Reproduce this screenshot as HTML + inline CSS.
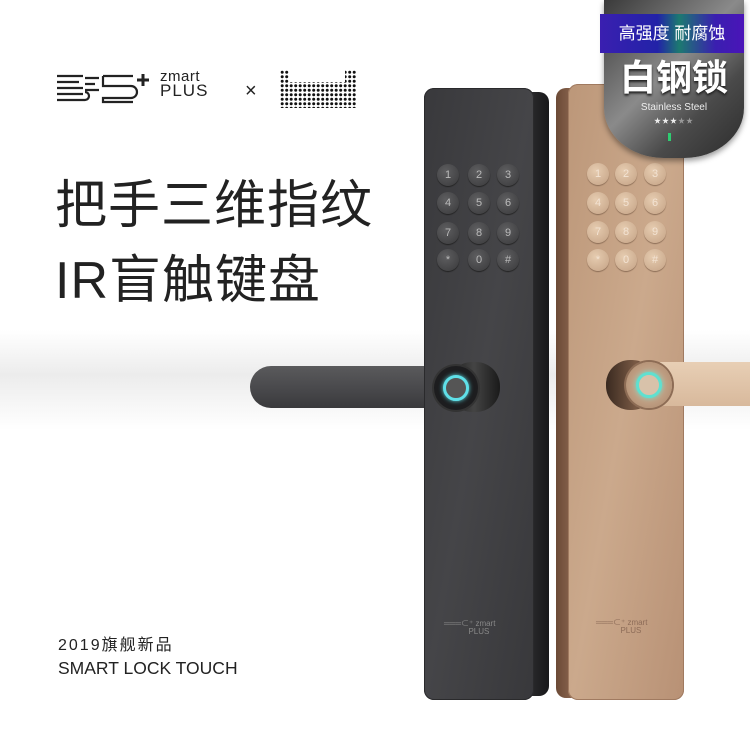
<!DOCTYPE html>
<html><head><meta charset="utf-8"><style>
*{margin:0;padding:0;box-sizing:border-box}
body{width:750px;height:750px;overflow:hidden;background:#fff;position:relative;font-family:"Liberation Sans","Noto Sans CJK SC",sans-serif}
.a{position:absolute}
.key{position:absolute;width:22px;height:22px;border-radius:50%;text-align:center;line-height:22px;font-size:11px}
.dk .key{background:radial-gradient(circle at 40% 35%,#5e5e60,#39393b);color:#bbb;box-shadow:0 1px 1px #222}
.gd .key{background:radial-gradient(circle at 40% 35%,#e6ccb0,#c4a285);color:#f3e3d3;box-shadow:0 1px 1px #8a6c55}
</style></head><body>
<div class="a" style="left:0;top:330px;width:750px;height:100px;background:linear-gradient(180deg,#fff,#ececec 45%,#fff)"></div>
<svg class="a" style="left:55px;top:72px" width="100" height="36" viewBox="0 0 100 36" fill="none" stroke="#222" stroke-width="2.2">
<path d="M2 4h26M2 10h22M2 16h26M2 22h26M2 28h28a4 4 0 0 0 0-8"/>
<path d="M30 6h14M30 12h10M30 18h14"/>
<path d="M48 4h30M48 4v10h28a6 6 0 0 1 0 12H48v4h30"/>
<path d="M88 2v12M82 8h12" stroke-width="3"/>
</svg>
<div class="a" style="left:160px;top:70px;font-size:15px;line-height:14px;color:#222;letter-spacing:0.5px">zmart<br><span style="font-size:17px;letter-spacing:1px">PLUS</span></div>
<div class="a" style="left:245px;top:80px;font-size:20px;color:#222">×</div>
<svg class="a" style="left:280px;top:70px" width="76" height="38">
<defs><pattern id="p" width="4.5" height="4.5" patternUnits="userSpaceOnUse"><circle cx="2.2" cy="2.2" r="1.5" fill="#111"/></pattern></defs>
<path d="M0 0h9v12h56V0h11v38H0z" fill="url(#p)"/>
</svg>
<div class="a" style="left:55px;top:175px;font-size:52px;line-height:62px;color:#222;letter-spacing:1px">把手三维指纹</div>
<div class="a" style="left:55px;top:250px;font-size:52px;line-height:62px;color:#222;letter-spacing:1px">IR盲触键盘</div>
<div class="a" style="left:58px;top:631px;font-size:16px;color:#222;letter-spacing:2px">2019旗舰新品</div>
<div class="a" style="left:58px;top:658px;font-size:17.5px;color:#222">SMART LOCK TOUCH</div>

<div class="a" style="left:250px;top:366px;width:230px;height:42px;border-radius:21px 0 0 21px;background:linear-gradient(180deg,#5a5a5c,#47474a 60%,#3a3a3c)"></div>
<div class="a" style="left:530px;top:92px;width:19px;height:604px;border-radius:0 10px 10px 0;background:linear-gradient(90deg,#2a2a2c,#18181a)"></div>
<div class="a dk" style="left:424px;top:88px;width:110px;height:612px;border-radius:10px;background:linear-gradient(100deg,#39393c,#454548 50%,#38383b);box-shadow:inset 0 0 0 1px #2a2a2c">
<div class="key" style="left:13px;top:76px">1</div><div class="key" style="left:44px;top:76px">2</div><div class="key" style="left:73px;top:76px">3</div>
<div class="key" style="left:13px;top:104px">4</div><div class="key" style="left:44px;top:104px">5</div><div class="key" style="left:73px;top:104px">6</div>
<div class="key" style="left:13px;top:134px">7</div><div class="key" style="left:44px;top:134px">8</div><div class="key" style="left:73px;top:134px">9</div>
<div class="key" style="left:13px;top:161px">*</div><div class="key" style="left:44px;top:161px">0</div><div class="key" style="left:73px;top:161px">#</div>
<div class="a" style="left:20px;top:532px;font-size:8px;color:#888;line-height:8px">═══⊂⁺ zmart<br>&nbsp;&nbsp;&nbsp;&nbsp;&nbsp;&nbsp;&nbsp;&nbsp;&nbsp;&nbsp;&nbsp;PLUS</div>
</div>
<div class="a" style="left:448px;top:362px;width:52px;height:50px;border-radius:24px;background:linear-gradient(90deg,#1a1a1a,#444 50%,#1a1a1a)"></div>
<div class="a" style="left:434px;top:366px;width:44px;height:44px;border-radius:50%;background:#1d1d1f;box-shadow:0 0 0 2px #333"></div>
<div class="a" style="left:443px;top:375px;width:26px;height:26px;border-radius:50%;border:3px solid #5fe0e8;background:#555;box-shadow:0 0 5px #5fe0e8"></div>

<div class="a" style="left:556px;top:88px;width:18px;height:610px;border-radius:10px 0 0 10px;background:linear-gradient(90deg,#6b4a36,#8c6650)"></div>
<div class="a gd" style="left:568px;top:84px;width:116px;height:616px;border-radius:10px;background:linear-gradient(100deg,#bc9779,#cba98c 50%,#b89175);box-shadow:inset 0 0 0 1px #a07a60">
<div class="key" style="left:19px;top:79px">1</div><div class="key" style="left:47px;top:79px">2</div><div class="key" style="left:76px;top:79px">3</div>
<div class="key" style="left:19px;top:108px">4</div><div class="key" style="left:47px;top:108px">5</div><div class="key" style="left:76px;top:108px">6</div>
<div class="key" style="left:19px;top:137px">7</div><div class="key" style="left:47px;top:137px">8</div><div class="key" style="left:76px;top:137px">9</div>
<div class="key" style="left:19px;top:165px">*</div><div class="key" style="left:47px;top:165px">0</div><div class="key" style="left:76px;top:165px">#</div>
<div class="a" style="left:28px;top:535px;font-size:8px;color:#8d6c58;line-height:8px">═══⊂⁺ zmart<br>&nbsp;&nbsp;&nbsp;&nbsp;&nbsp;&nbsp;&nbsp;&nbsp;&nbsp;&nbsp;&nbsp;PLUS</div>
</div>
<div class="a" style="left:660px;top:362px;width:90px;height:44px;background:linear-gradient(180deg,#e8cfb5,#d8b99c)"></div>
<div class="a" style="left:606px;top:360px;width:50px;height:50px;border-radius:24px;background:linear-gradient(90deg,#3a2a20,#7a5a45 60%,#3a2a20)"></div>
<div class="a" style="left:626px;top:362px;width:46px;height:46px;border-radius:50%;background:radial-gradient(#d9bda2,#a88468);box-shadow:0 0 0 2px #8d6c55"></div>
<div class="a" style="left:636px;top:372px;width:26px;height:26px;border-radius:50%;border:3px solid #5fe0d0;background:#d8c2aa;box-shadow:0 0 5px #5fe0d0"></div>

<div class="a" style="left:604px;top:0;width:140px;height:158px;border-radius:0 0 60px 60px/0 0 50px 50px;background:linear-gradient(135deg,#3a3a3a,#8a8a8a 45%,#4a4a4a 70%,#2c2c2c);box-shadow:0 3px 6px rgba(0,0,0,.4)"></div>
<div class="a" style="left:600px;top:14px;width:144px;height:39px;background:linear-gradient(90deg,#3a1fb0,#2222a8 40%,#1c7a70 55%,#3a1fb0 80%,#4a14b8);color:#fff;font-size:17px;line-height:39px;text-align:center">高强度 耐腐蚀</div>
<div class="a" style="left:604px;top:56px;width:140px;text-align:center;color:#fff;font-size:36px;font-weight:bold;line-height:44px;text-shadow:0 2px 2px #222">白钢锁</div>
<div class="a" style="left:604px;top:102px;width:140px;text-align:center;color:#eee;font-size:10px">Stainless Steel</div>
<div class="a" style="left:604px;top:116px;width:140px;text-align:center;color:#eee;font-size:7px;letter-spacing:1px">★★★<span style="color:#999">★★</span></div>
<div class="a" style="left:668px;top:133px;width:3px;height:8px;background:#2ecc71"></div>
</body></html>
